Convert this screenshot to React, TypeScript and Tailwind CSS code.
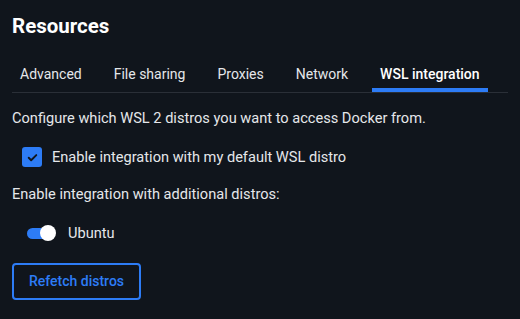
import React from "react";

export default function App() {
  const tabs = ["Advanced", "File sharing", "Proxies", "Network", "WSL integration"];
  return (
    <div
      className="w-[520px] h-[319px] bg-[#10151c] text-[#e5e7ea] overflow-hidden"
      style={{ fontFamily: "Roboto, 'Noto Sans', sans-serif" }}
    >
      <div className="px-3 pt-[12px]">
        <h1 className="text-[20.5px] leading-[28px] font-bold text-white">Resources</h1>
        <div className="mt-[24px] flex gap-4 border-b border-[#2a2f37]">
          {tabs.map((t, i) => (
            <div
              key={t}
              className={
                "px-2 pb-[4px] text-[14px] leading-[20px] border-b-[4px] " +
                (i === 4 ? "border-[#2d7cf6] font-medium text-white" : "border-transparent text-[#e5e7ea]")
              }
            >
              {t}
            </div>
          ))}
        </div>
        <p className="mt-[15px] text-[14.6px] leading-[20px]">
          Configure which WSL 2 distros you want to access Docker from.
        </p>
        <div className="mt-[19px] ml-[10px] flex items-center gap-[10px]">
          <div className="w-[20px] h-[20px] rounded-[3px] bg-[#2d7cf6] flex items-center justify-center">
            <svg width="13" height="13" viewBox="0 0 24 24" fill="none" stroke="#10151c" strokeWidth="3.5" strokeLinecap="round" strokeLinejoin="round">
              <path d="M5 12.5l4.5 4.5L19 7.5" />
            </svg>
          </div>
          <span className="text-[14.6px] leading-[20px]">Enable integration with my default WSL distro</span>
        </div>
        <p className="mt-[17px] text-[14.6px] leading-[20px]">Enable integration with additional distros:</p>
        <div className="mt-[19px] ml-[15px] flex items-center gap-[12px]">
          <div className="relative w-[29px] h-[16px] flex items-center">
            <div className="w-[26px] h-[11px] rounded-full bg-[#2d7cf6]" />
            <div className="absolute right-0 top-0 w-[16px] h-[16px] rounded-full bg-white" />
          </div>
          <span className="text-[14.6px] leading-[20px]">Ubuntu</span>
        </div>
        <button className="block mt-[20px] w-[129px] h-[37px] rounded-[4px] border-2 border-[#2d7cf6] text-[#2d7cf6] text-[14px] font-medium">
          Refetch distros
        </button>
      </div>
    </div>
  );
}
